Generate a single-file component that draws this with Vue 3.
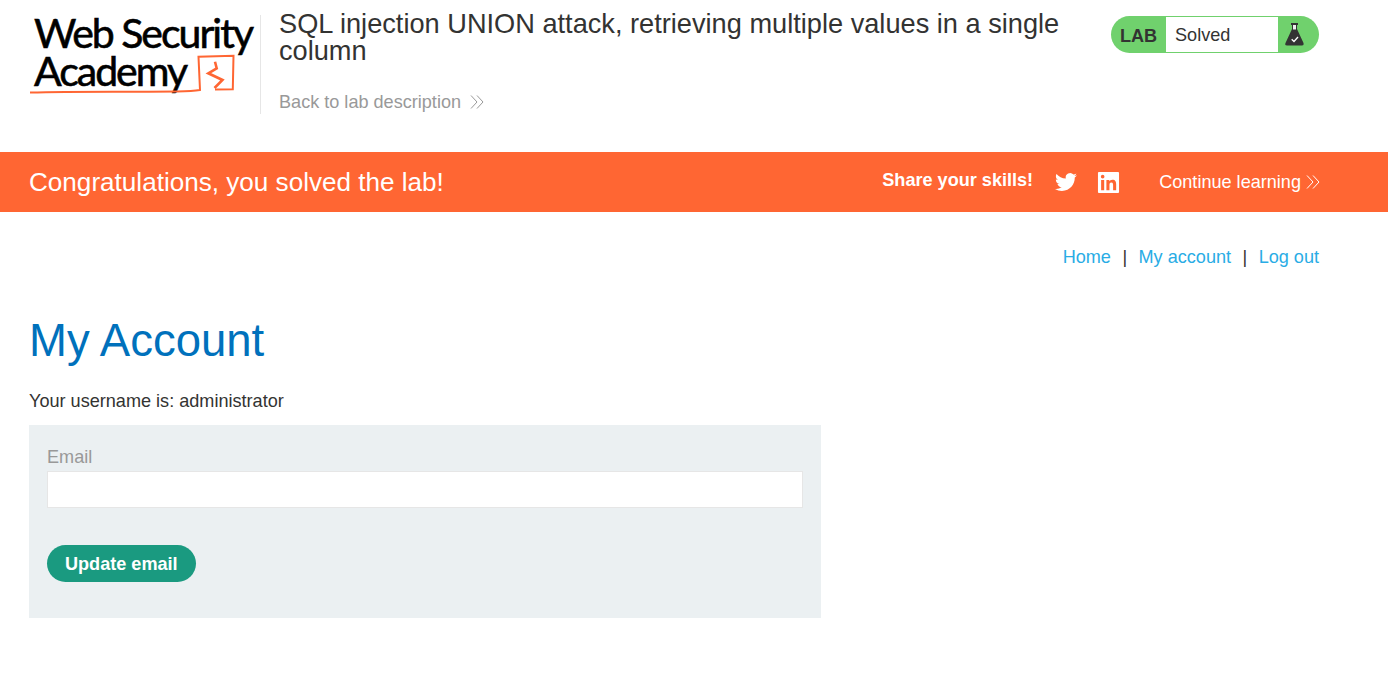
<template>
  <div class="page">
    <header class="lab-header">
      <div class="logo">
        <div class="logo-text">
          <span class="logo-line">Web Security</span>
          <span class="logo-line">Academy</span>
        </div>
        <svg class="logo-mark" viewBox="0 0 226 90" width="226" height="90">
          <path d="M1 77.500 C50 76 100 77 148 76.500 C158 76.300 165 76 171 75 L169.500 41.800 L204.500 40.800 L203.800 74.300 L186 74.500" fill="none" stroke="#ff6633" stroke-width="2"/>
          <path d="M186 46.700 L187.700 53.300 L179.300 58.300 L193.500 65 L185.500 73" fill="none" stroke="#ff6633" stroke-width="2.600"/>
        </svg>
      </div>
      <div class="title-block">
        <h2>SQL injection UNION attack, retrieving multiple values in a single column</h2>
        <a class="back-link">Back to lab description
          <svg class="chevrons" viewBox="0 0 14 14" width="14" height="14">
            <path d="M1 0.500 L7 7 L1 13.500 M7 0.500 L13 7 L7 13.500" fill="none" stroke="currentColor" stroke-width="1"/>
          </svg>
        </a>
      </div>
      <div class="status">
        <span class="status-lab">LAB</span>
        <span class="status-value">Solved</span>
        <span class="status-icon">
          <svg viewBox="0 0 20 24" width="20" height="24">
            <path d="M7 0 H14 V2 H13 V6 L19.500 20 Q20 22.500 18 22.500 H3 Q0.500 22.500 1.500 20 L8 6 V2 H7 Z" fill="#333"/>
            <rect x="9" y="2" width="3" height="4.500" fill="#eee"/>
            <path d="M7.700 16.200 L10 18.500 L14 14" fill="none" stroke="#fff" stroke-width="1.300"/>
          </svg>
        </span>
      </div>
    </header>

    <section class="banner">
      <h4>Congratulations, you solved the lab!</h4>
      <div class="share">
        <span class="share-label">Share your skills!</span>
        <svg class="twitter" viewBox="0 0 24 24" width="22" height="22">
          <path fill="#fff" d="M23.950 4.570a10 10 0 0 1-2.820.77 4.960 4.960 0 0 0 2.160-2.720c-.95.550-2 .96-3.130 1.190a4.920 4.920 0 0 0-8.380 4.480C7.690 8.090 4.070 6.130 1.640 3.160a4.820 4.820 0 0 0-.66 2.470c0 1.710.87 3.210 2.190 4.100a4.900 4.900 0 0 1-2.230-.62v.06a4.920 4.920 0 0 0 3.950 4.830 5 5 0 0 1-2.210.08 4.940 4.940 0 0 0 4.600 3.420A9.870 9.870 0 0 1 0 19.540a14 14 0 0 0 7.560 2.210c9.050 0 14-7.500 14-13.980 0-.21 0-.42-.02-.63a9.940 9.940 0 0 0 2.410-2.570z"/>
        </svg>
        <svg class="linkedin" viewBox="0 0 24 24" width="23" height="23">
          <path fill="#fff" d="M22 1H2a1 1 0 0 0-1 1v20a1 1 0 0 0 1 1h20a1 1 0 0 0 1-1V2a1 1 0 0 0-1-1zM7.500 20H4.300V9.300h3.200V20zM5.900 7.800a1.900 1.900 0 1 1 0-3.800 1.900 1.900 0 0 1 0 3.800zM20 20h-3.200v-5.200c0-1.300 0-2.900-1.800-2.900s-2 1.400-2 2.800V20H9.800V9.300h3.100v1.500c.4-.8 1.500-1.800 3.100-1.800 3.300 0 4 2.200 4 5V20z"/>
        </svg>
      </div>
      <a class="continue">Continue learning
        <svg class="chevrons" viewBox="0 0 14 14" width="14" height="14">
          <path d="M1 0.500 L7 7 L1 13.500 M7 0.500 L13 7 L7 13.500" fill="none" stroke="currentColor" stroke-width="1"/>
        </svg>
      </a>
    </section>

    <main class="content">
      <nav class="top-links">
        <a>Home</a><span class="sep">|</span><a>My account</a><span class="sep">|</span><a>Log out</a>
      </nav>
      <h1>My Account</h1>
      <p class="username">Your username is: administrator</p>
      <form class="email-form" @submit.prevent>
        <label for="email">Email</label>
        <input id="email" type="email" />
        <button type="submit">Update email</button>
      </form>
    </main>
  </div>
</template>

<script setup>
</script>

<style>
html, body { margin: 0; background: #fff; }
</style>

<style scoped>
.page {
  font-family: "Liberation Sans", Arial, sans-serif;
  color: #333332;
  font-size: 18.1px;
}
.lab-header {
  height: 152px;
  box-sizing: border-box;
  padding: 0 69px 0 29px;
  display: flex;
  align-items: flex-start;
}
.logo {
  position: relative;
  width: 232px;
  height: 99px;
  margin-top: 15px;
  border-right: 1px solid #e6e6e6;
  flex: none;
  box-sizing: border-box;
}
.logo-text {
  margin-top: -1px;
  padding: 0 0 0 5px;
  font-family: Lato, sans-serif;
  color: #000;
  font-size: 41px;
  line-height: 38px;
  letter-spacing: -2px;
  -webkit-text-stroke: 0.6px #000;
}
.logo-line { display: block; white-space: nowrap; }
.logo-mark { position: absolute; left: 0; top: 0; }
.title-block {
  width: 800px;
  padding-left: 18px;
  flex: none;
}
.title-block h2 {
  margin: 10px 0 0;
  font-size: 27.2px;
  line-height: 27px;
  font-weight: 400;
}
.back-link {
  display: flex;
  align-items: center;
  gap: 9px;
  margin-top: 26px;
  color: #999;
  line-height: 24px;
}
.status {
  margin-left: auto;
  margin-top: 16px;
  width: 208px;
  height: 37px;
  box-sizing: border-box;
  flex: none;
  display: flex;
  background: #70d16d;
  border-radius: 19px;
  padding: 1px 0;
  overflow: hidden;
}
.status-lab {
  width: 55px;
  padding-left: 9px;
  box-sizing: border-box;
  font-weight: 700;
  line-height: 38px;
}
.status-value {
  width: 112px;
  box-sizing: border-box;
  padding-left: 9px;
  background: #fff;
  line-height: 36px;
}
.status-icon {
  flex: 1;
  padding: 6px 0 0 6px;
  box-sizing: border-box;
}
.banner {
  height: 60px;
  box-sizing: border-box;
  padding: 0 68px 0 29px;
  background: #ff6633;
  color: #fff;
  display: flex;
  align-items: center;
}
.banner h4 {
  margin: 0;
  font-size: 26.1px;
  font-weight: 400;
}
.share {
  margin-left: auto;
  display: flex;
  align-items: center;
}
.share-label { font-weight: 700; margin-top: -3px; }
.twitter { margin-left: 22px; }
.linkedin { margin-left: 20px; }
.continue {
  display: flex;
  align-items: center;
  gap: 5px;
  margin-left: 39px;
}
.content {
  padding: 0 69px 0 29px;
}
.top-links {
  display: flex;
  justify-content: flex-end;
  padding-top: 33px;
  line-height: 24px;
  color: #333332;
}
.top-links a { color: #29ace5; }
.sep { margin: 0 11.450px; }
h1 {
  margin: 45px 0 0;
  color: #0071bc;
  font-size: 45.500px;
  font-weight: 400;
  line-height: 54px;
}
.username {
  margin: 21px 0 0;
  line-height: 24px;
}
.email-form {
  width: 792px;
  height: 193px;
  margin-top: 12px;
  box-sizing: border-box;
  padding: 18px;
  background: #ebf0f2;
  display: flex;
  flex-direction: column;
  align-items: flex-start;
}
.email-form label {
  color: #999;
  line-height: 28px;
}
.email-form input {
  width: 100%;
  height: 37px;
  box-sizing: border-box;
  border: 1px solid #e6e6e6;
  background: #fff;
  padding: 0;
}
.email-form button {
  margin-top: 37px;
  height: 37px;
  padding: 1px 18px 0;
  border: 0;
  border-radius: 19px;
  background: #1a9a80;
  color: #fff;
  font: 700 18.100px "Liberation Sans", Arial, sans-serif;
}
</style>
